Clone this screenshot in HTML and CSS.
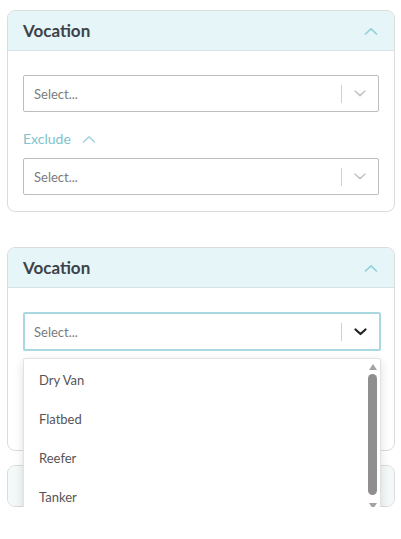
FILE: index.html
```html
<!DOCTYPE html>
<html lang="en">

<head>
    <meta charset="UTF-8">
    <meta name="viewport" content="width=device-width, initial-scale=1.0">
    <title>Vocation Filter</title>
    <link rel="stylesheet" href="styles.css">
</head>

<body>

    <div class="filters">

        <!-- closed state -->
        <div class="card">
            <div class="card-header">
                <span class="card-title">Vocation</span>
                <svg class="chev-up" width="14" height="8" viewBox="0 0 14 8"><path d="M1.5 7 L7 1.8 L12.5 7" fill="none" stroke="#8fd0d8" stroke-width="1.6" stroke-linecap="round" stroke-linejoin="round"/></svg>
            </div>
            <div class="card-body">
                <div class="select">
                    <span class="placeholder">Select...</span>
                    <span class="sep"></span>
                    <svg class="chev" width="12" height="7" viewBox="0 0 12 7"><path d="M1 1 L6 5.6 L11 1" fill="none" stroke="#c2c2c2" stroke-width="1.5" stroke-linecap="round" stroke-linejoin="round"/></svg>
                </div>
                <div class="exclude">
                    Exclude
                    <svg width="14" height="8" viewBox="0 0 14 8"><path d="M1.5 7 L7 1.8 L12.5 7" fill="none" stroke="#9fd3da" stroke-width="1.4" stroke-linecap="round" stroke-linejoin="round"/></svg>
                </div>
                <div class="select">
                    <span class="placeholder">Select...</span>
                    <span class="sep"></span>
                    <svg class="chev" width="12" height="7" viewBox="0 0 12 7"><path d="M1 1 L6 5.6 L11 1" fill="none" stroke="#c2c2c2" stroke-width="1.5" stroke-linecap="round" stroke-linejoin="round"/></svg>
                </div>
            </div>
        </div>

        <!-- open state -->
        <div class="card card-open">
            <div class="card-header">
                <span class="card-title">Vocation</span>
                <svg class="chev-up" width="14" height="8" viewBox="0 0 14 8"><path d="M1.5 7 L7 1.8 L12.5 7" fill="none" stroke="#8fd0d8" stroke-width="1.6" stroke-linecap="round" stroke-linejoin="round"/></svg>
            </div>
            <div class="card-body">
                <div class="select-wrap">
                    <div class="select focused">
                        <span class="placeholder">Select...</span>
                        <span class="sep"></span>
                        <svg class="chev" width="13" height="8" viewBox="0 0 13 8"><path d="M1.5 1.5 L6.5 6 L11.5 1.5" fill="none" stroke="#222" stroke-width="2.2" stroke-linecap="round" stroke-linejoin="round"/></svg>
                    </div>
                    <div class="menu">
                        <ul class="options">
                            <li>Dry Van</li>
                            <li>Flatbed</li>
                            <li>Reefer</li>
                            <li>Tanker</li>
                        </ul>
                        <div class="scrollbar">
                            <span class="arrow-up"></span>
                            <span class="thumb"></span>
                            <span class="arrow-down"></span>
                        </div>
                    </div>
                </div>
                <!-- covered by the open menu -->
                <div class="covered">
                    <div class="exclude">
                        Exclude
                        <svg width="14" height="8" viewBox="0 0 14 8"><path d="M1.5 7 L7 1.8 L12.5 7" fill="none" stroke="#9fd3da" stroke-width="1.4" stroke-linecap="round" stroke-linejoin="round"/></svg>
                    </div>
                    <div class="select">
                        <span class="placeholder">Select...</span>
                    </div>
                </div>
            </div>
        </div>

        <!-- next filter, collapsed (title hidden under the menu) -->
        <div class="card card-collapsed">
            <div class="card-header"></div>
        </div>

    </div>

</body>

</html>
```

FILE: styles.css
```css
body {
    margin: 0;
    padding: 0;
    background-color: #fff;
    font-family: Lato, "Noto Sans", sans-serif;
}

.filters {
    padding: 10px 6px 0 7px;
    display: flex;
    flex-direction: column;
}

.card {
    border: 1px solid #dcdcdc;
    border-radius: 8px;
    background-color: #fff;
}

.card-open {
    margin-top: 35px;
}

.card-collapsed {
    margin-top: 14px;
}

.card-header {
    height: 39px;
    border-bottom: 1px solid #d6e2e5;
    background-color: #e6f5f8;
    border-radius: 7px 7px 0 0;
    display: flex;
    align-items: center;
    justify-content: space-between;
    padding: 0 15px;
}

.card-collapsed .card-header {
    height: 40px;
    border-bottom: none;
    border-radius: 7px;
    background-color: #f3f8f9;
}

.card-title {
    font-size: 17px;
    font-weight: bold;
    color: #3c4247;
    margin-top: -1px;
}

.chev-up {
    margin-right: 1px;
}

.card-body {
    padding: 24px 15px 16px;
}

.select {
    height: 35px;
    border: 1px solid #bdbdbd;
    border-radius: 2px;
    display: flex;
    align-items: center;
    padding-left: 10px;
    padding-right: 12px;
}

.select.focused {
    height: 35px;
    border: 2px solid #a9d8e0;
    margin-right: -2px;
    padding-left: 9px;
}

.placeholder {
    flex: 1;
    font-size: 13px;
    color: #7b7b7b;
}

.sep {
    width: 1px;
    height: 18px;
    background-color: #d0d0d0;
    margin-right: 12px;
}

.select-wrap {
    position: relative;
}

.covered {
    visibility: hidden;
}

.exclude {
    margin: 17px 0 10px;
    height: 19px;
    display: flex;
    align-items: center;
    gap: 11px;
    font-size: 14px;
    color: #7fc3cc;
}

.menu {
    position: absolute;
    top: calc(100% + 7px);
    left: 0;
    right: -2px;
    height: 153px;
    background-color: #fff;
    border: 1px solid #e2e2e2;
    border-radius: 2px;
    box-shadow: 0 3px 10px rgba(0, 0, 0, 0.13);
    overflow: hidden;
    z-index: 5;
    visibility: visible;
}

.options {
    list-style: none;
    margin: 0;
    padding: 2px 0 0;
}

.options li {
    height: 39px;
    line-height: 39px;
    padding-left: 15px;
    font-size: 13px;
    color: #555;
}

.scrollbar {
    position: absolute;
    top: 0;
    right: 2px;
    bottom: 0;
    width: 11px;
    display: flex;
    flex-direction: column;
    align-items: center;
    padding: 5px 0 3px;
    box-sizing: border-box;
}

.arrow-up,
.arrow-down {
    width: 0;
    height: 0;
    border-left: 4px solid transparent;
    border-right: 4px solid transparent;
}

.arrow-up {
    border-bottom: 6px solid #a3a3a3;
}

.arrow-down {
    border-top: 6px solid #a3a3a3;
}

.thumb {
    flex: 1;
    width: 9px;
    margin: 4px 0 8px;
    border-radius: 5px;
    background-color: #8f8f8f;
}
```
